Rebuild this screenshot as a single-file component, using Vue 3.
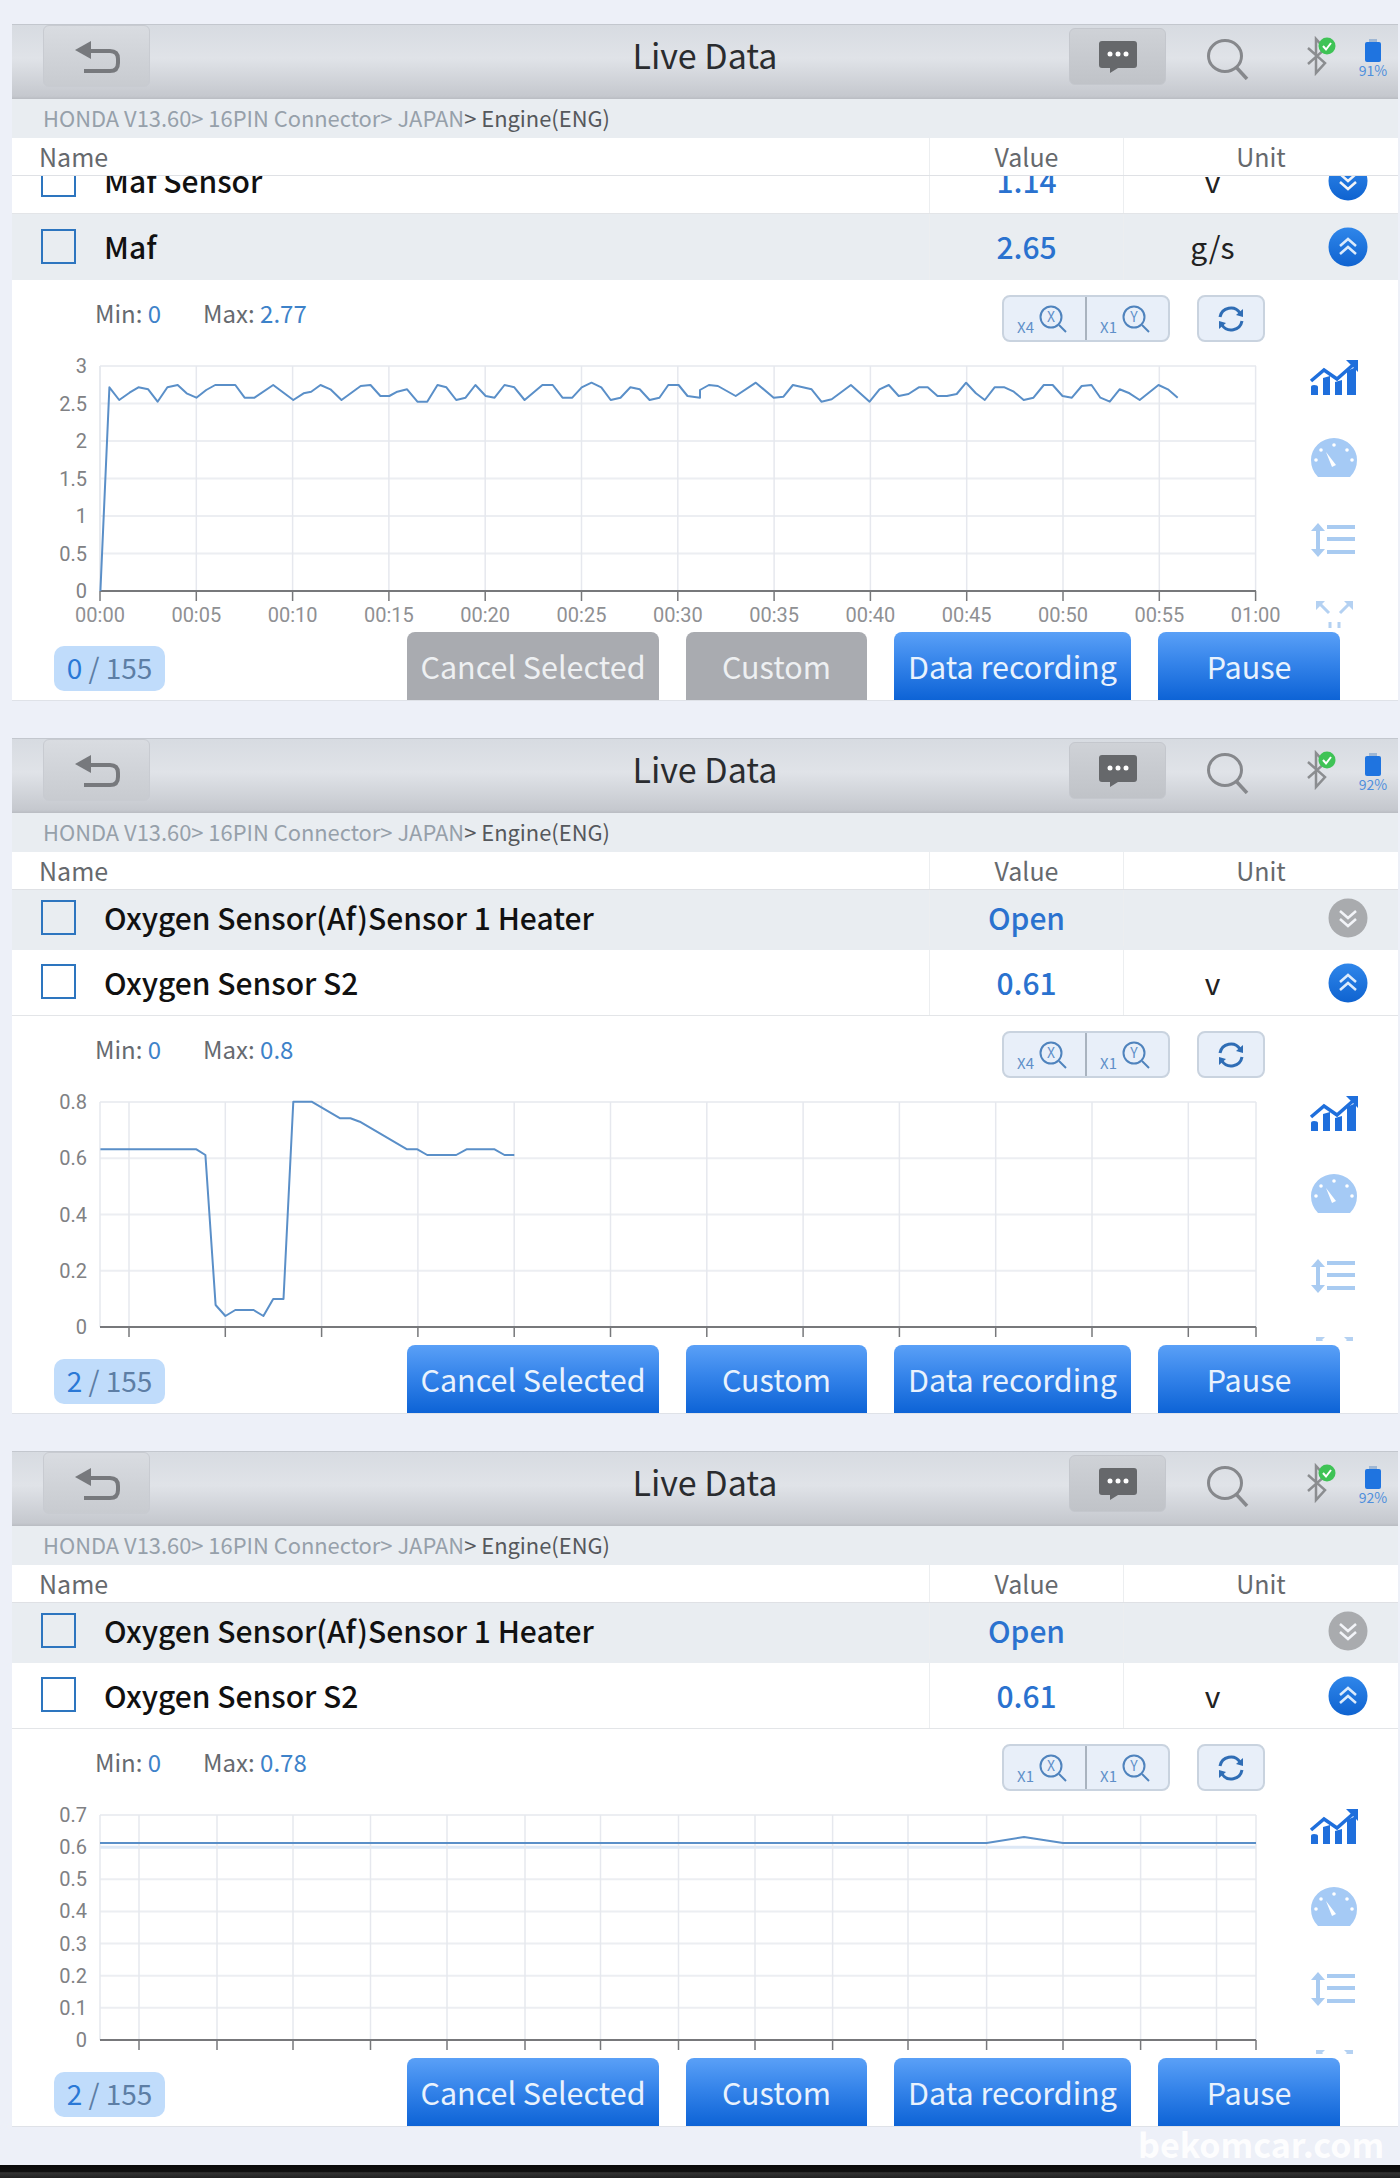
<script setup>
const X = (z) => z / 2.24
const pts1a = [[225,723],[245,112],[267,150],[290,128],[310,112],[332,118],[353,155],[375,112],[398,105],[418,130],[440,143],[462,120],[482,105],[527,105],[548,143],[570,143],[612,105],[657,150],[680,130],[697,125],[718,105],[740,118],[765,150],[808,108],[830,105],[852,138],[872,138],[890,125],[912,118],[935,155],[957,155],[980,105],[1000,112],[1022,150],[1043,143],[1065,105],[1088,138],[1108,143],[1130,105],[1152,112],[1175,150],[1215,105],[1238,105],[1260,143],[1282,143],[1303,112],[1325,98],[1347,112],[1368,150],[1390,143],[1412,112],[1433,118],[1455,150],[1477,143],[1497,105],[1520,105],[1540,138],[1568,143]]
const pts1b = [[0,120],[20,105],[40,108],[80,138],[125,98],[165,143],[187,140],[208,105],[250,118],[272,155],[295,148],[338,105],[380,155],[402,118],[423,105],[445,138],[467,132],[490,112],[510,112],[532,138],[553,138],[575,132],[596,98],[618,130],[638,150],[660,112],[682,112],[703,125],[725,150],[747,143],[770,105],[790,105],[812,138],[833,143],[855,108],[877,105],[897,143],[918,155],[940,118],[962,130],[985,150],[1027,105],[1048,118],[1070,143]]
const line1 = [
  ...pts1a.map(([x, y]) => [X(x), 350 + y / 3 - 355]),
  ...pts1b.map(([x, y]) => [700 + X(x), 350 + y / 3 - 355]),
]
const pts2 = [[225,298],[440,298],[460,315],[483,765],[505,798],[527,780],[568,780],[590,798],[612,747],[635,747],[657,155],[698,155],[762,205],[785,205],[806,215],[912,298],[935,298],[957,315],[1022,315],[1045,298],[1108,298],[1130,315],[1152,315]]
const line2 = pts2.map(([x, y]) => [X(x), 1050 + y / 3 - 1091])
const line3 = [[100, 39], [986.6, 39], [1024, 33], [1063, 39], [1256, 39]]

const toPoints = (l) => l.map((p) => p.map((n) => n.toFixed(1)).join(',')).join(' ')

const fiveSec = Array.from({ length: 13 }, (_, i) => 100 + i * 96.3)
const labels = ['00:00','00:05','00:10','00:15','00:20','00:25','00:30','00:35','00:40','00:45','00:50','00:55','01:00']

const panels = [
  {
    id: 1, battery: '91%', clipped: true,
    rows: [
      { name: 'Maf Sensor', value: '1.14', unit: 'v', dir: 'down', blue: true },
      { name: 'Maf', value: '2.65', unit: 'g/s', dir: 'up', blue: true, grey: true },
    ],
    min: '0', max: '2.77', xz: 'X4', yz: 'X1',
    height: 276,
    ys: ['3', '2.5', '2', '1.5', '1', '0.5', '0'],
    xs: fiveSec, xLabels: labels, line: toPoints(line1),
    count: '0', active: false,
  },
  {
    id: 2, battery: '92%',
    rows: [
      { name: 'Oxygen Sensor(Af)Sensor 1 Heater', value: 'Open', unit: '', dir: 'down', blue: false, grey: true, short: true },
      { name: 'Oxygen Sensor S2', value: '0.61', unit: 'v', dir: 'up', blue: true },
    ],
    min: '0', max: '0.8', xz: 'X4', yz: 'X1',
    height: 253,
    ys: ['0.8', '0.6', '0.4', '0.2', '0'],
    xs: Array.from({ length: 12 }, (_, i) => 129 + i * 96.3).concat(1256), xLabels: [],
    line: toPoints(line2), count: '2', active: true,
  },
  {
    id: 3, battery: '92%',
    rows: [
      { name: 'Oxygen Sensor(Af)Sensor 1 Heater', value: 'Open', unit: '', dir: 'down', blue: false, grey: true, short: true },
      { name: 'Oxygen Sensor S2', value: '0.61', unit: 'v', dir: 'up', blue: true },
    ],
    min: '0', max: '0.78', xz: 'X1', yz: 'X1',
    height: 253,
    ys: ['0.7', '0.6', '0.5', '0.4', '0.3', '0.2', '0.1', '0'],
    xs: [139,217,293,370.5,447,525,600.5,678.5,755,832.6,908,986.6,1063,1140.6,1216.5,1256], xLabels: [],
    line: toPoints(line3), count: '2', active: true, band: 1,
  },
]

const yPos = (p, i) => 11 + (225 * i) / (p.ys.length - 1)
const buttons = ['Cancel Selected', 'Custom', 'Data recording', 'Pause']
</script>

<template>
  <div class="page">
    <div v-for="p in panels" :key="p.id" class="panel">
      <header class="topbar">
        <button class="back">
          <svg width="50" height="38" viewBox="0 0 50 38"><path d="M18 14H38Q46 14 46 22V26Q46 34 38 34H12" fill="none" stroke="#77797d" stroke-width="4"/><path d="M3 13L19 4V22Z" fill="#77797d"/></svg>
        </button>
        <h1 class="title">Live Data</h1>
        <button class="chat">
          <svg width="40" height="34" viewBox="0 0 40 34"><path d="M4 1H36Q39 1 39 4V25Q39 28 36 28H20L12 33V28H4Q1 28 1 25V4Q1 1 4 1Z" fill="#66686b"/><circle cx="12" cy="14" r="2.5" fill="#fff"/><circle cx="20" cy="14" r="2.5" fill="#fff"/><circle cx="28" cy="14" r="2.5" fill="#fff"/></svg>
        </button>
        <svg class="search" width="42" height="42" viewBox="0 0 42 42"><ellipse cx="18" cy="18" rx="16.5" ry="15.5" fill="none" stroke="#86888c" stroke-width="3"/><path d="M29 29L40 41" stroke="#86888c" stroke-width="3.5"/></svg>
        <svg class="bt" width="34" height="40" viewBox="0 0 34 40"><path d="M5 12L22 27L13 37V3L22 13L5 28" fill="none" stroke="#8b8d90" stroke-width="2.5"/><circle cx="24" cy="10" r="8.5" fill="#3fc356"/><path d="M20 10L23 13.5L28 7" fill="none" stroke="#fff" stroke-width="2"/></svg>
        <div class="battery">
          <svg width="18" height="24" viewBox="0 0 18 24"><rect x="5" y="0" width="8" height="3" fill="#9fb7d4"/><rect x="1" y="3" width="16" height="20" rx="2" fill="#1f74e0"/></svg>
          <span>{{ p.battery }}</span>
        </div>
      </header>

      <div class="crumb"><span class="faint">HONDA V13.60&gt; 16PIN Connector&gt; JAPAN</span>&gt; Engine(ENG)</div>

      <div class="thead">
        <span class="th-name">Name</span>
        <span class="th-cell">Value</span>
        <span class="th-cell">Unit</span>
      </div>

      <div class="rows">
        <div v-for="r in p.rows" :key="r.name" class="row" :class="{ grey: r.grey, short: r.short }">
          <div class="name"><span class="check"></span>{{ r.name }}</div>
          <div class="value">{{ r.value }}</div>
          <div class="unit">{{ r.unit }}</div>
          <div class="toggle">
            <svg width="40" height="40" viewBox="0 0 40 40">
              <defs>
                <linearGradient :id="`b${p.id}${r.name.length}`" x1="0" y1="0" x2="0" y2="1"><stop offset="0" stop-color="#2f86ea"/><stop offset="1" stop-color="#0f63d0"/></linearGradient>
              </defs>
              <circle cx="20" cy="20" r="19.5" :fill="r.blue ? `url(#b${p.id}${r.name.length})` : '#a9abae'"/>
              <path v-if="r.dir === 'up'" d="M12 19L20 12L28 19M12 27L20 20L28 27" fill="none" stroke="#dcebfc" stroke-width="2.5"/>
              <path v-else d="M12 13L20 20L28 13M12 21L20 28L28 21" fill="none" stroke="#f2f4f8" stroke-width="2.5"/>
            </svg>
          </div>
        </div>
      </div>

      <div class="controls">
        <div class="minmax">
          <span>Min: <b>{{ p.min }}</b></span>
          <span>Max: <b>{{ p.max }}</b></span>
        </div>
        <div class="zoomers">
          <div class="zoom">
            <span class="zlabel">{{ p.xz }}</span>
            <svg width="30" height="30" viewBox="0 0 30 30"><circle cx="13" cy="12" r="10.5" fill="none" stroke="#4f83bd" stroke-width="2"/><path d="M21 20L28 27" stroke="#4f83bd" stroke-width="2"/><text x="13" y="17" class="zletter">X</text></svg>
          </div>
          <div class="zoom">
            <span class="zlabel">{{ p.yz }}</span>
            <svg width="30" height="30" viewBox="0 0 30 30"><circle cx="13" cy="12" r="10.5" fill="none" stroke="#4f83bd" stroke-width="2"/><path d="M21 20L28 27" stroke="#4f83bd" stroke-width="2"/><text x="13" y="17" class="zletter">Y</text></svg>
          </div>
        </div>
        <button class="refresh">
          <svg width="28" height="28" viewBox="0 0 28 28"><path d="M3 12A11 11 0 0 1 23 8" fill="none" stroke="#2f6db5" stroke-width="3"/><path d="M25 16A11 11 0 0 1 5 20" fill="none" stroke="#2f6db5" stroke-width="3"/><path d="M19 10L26 4L26 12Z" fill="#2f6db5"/><path d="M9 18L2 24L2 16Z" fill="#2f6db5"/></svg>
        </button>
      </div>

      <div class="chartrow" :style="{ height: p.height + 'px' }">
        <svg class="chart" width="1290" :height="p.height" :viewBox="`12 0 1290 ${p.height}`">
          <line v-for="(y, i) in p.ys" :key="'h' + i" x1="100" x2="1256" :y1="yPos(p, i)" :y2="yPos(p, i)" :stroke="p.band === i ? '#dde8f6' : '#eceef2'" :stroke-width="p.band === i ? 3 : 2"/>
          <line v-for="x in p.xs" :key="'v' + x" :x1="x" :x2="x" y1="11" y2="236" stroke="#e6e8ee" stroke-width="1.5"/>
          <line x1="100" x2="100" y1="11" y2="236" stroke="#e6e8ee" stroke-width="1.5"/>
          <line x1="100" x2="1256" y1="236" y2="236" stroke="#77787b" stroke-width="2"/>
          <line v-for="x in p.xs" :key="'t' + x" :x1="x" :x2="x" y1="236" y2="246" stroke="#77787b" stroke-width="1.5"/>
          <text v-for="(y, i) in p.ys" :key="'yl' + i" x="87" :y="yPos(p, i) + 7" class="ylab">{{ y }}</text>
          <text v-for="(l, i) in p.xLabels" :key="l" :x="p.xs[i]" y="267" class="xlab">{{ l }}</text>
          <polyline :points="p.line" fill="none" stroke="#5a8fc8" stroke-width="2" stroke-linejoin="round"/>
        </svg>
        <div class="side">
          <svg width="60" height="40" viewBox="0 0 60 40"><path d="M7 37V29Q7 27 10 27Q14 27 14 29V37ZM19 37V20L26 18V37ZM31 37V24L38 22V37ZM43 37V13L52 9V37Z" fill="#1f6fdc"/><path d="M7 23L20 12L33 21L50 6" fill="none" stroke="#1f6fdc" stroke-width="3.5"/><path d="M42 2H54V14Z" fill="#1f6fdc"/></svg>
          <svg width="60" height="40" viewBox="0 0 60 40"><path d="M14 39Q7 32 7 22A23 22 0 0 1 53 22Q53 32 46 39Z" fill="#a5caf5"/><path d="M22 14L32 27L28 29Z" fill="#fff"/><circle cx="30" cy="7" r="1.8" fill="#fff"/><circle cx="17" cy="12" r="1.8" fill="#fff"/><circle cx="43" cy="12" r="1.8" fill="#fff"/><circle cx="12" cy="22" r="1.8" fill="#fff"/><circle cx="48" cy="22" r="1.8" fill="#fff"/></svg>
          <svg class="listicon" width="60" height="40" viewBox="0 0 60 40"><path d="M14 6V33" stroke="#a9cbf1" stroke-width="4"/><path d="M7 11L14 3L21 11ZM7 29L14 37L21 29Z" fill="#a9cbf1"/><path d="M23 7H51M23 19H51M23 32H51" stroke="#a9cbf1" stroke-width="4"/></svg>
          <svg class="arrows" width="60" height="40" viewBox="0 0 60 40"><path d="M25 15L16 6M36 15L45 6M26 24L26 30M35 24L35 30" stroke="#b4d1f2" stroke-width="3"/><path d="M12 3H21L12 12ZM49 3H40L49 12Z" fill="#b4d1f2"/></svg>
        </div>
      </div>

      <footer class="foot">
        <div class="chip"><b>{{ p.count }}</b> / 155</div>
        <button v-for="(b, i) in buttons" :key="b" class="act" :class="['b' + i, { off: !p.active && i < 2 }]">{{ b }}</button>
      </footer>
    </div>
    <div class="mark">bekomcar.com</div>
    <div class="darkbar"></div>
  </div>
</template>

<style>
html, body { margin: 0; background: #edf0f8; }
</style>

<style scoped>
.page {
  position: relative;
  height: 2178px;
  box-sizing: border-box;
  padding: 24px 2px 0 12px;
  display: flex;
  flex-direction: column;
  gap: 38px;
  background: #edf0f8;
  font-family: "Noto Sans CJK SC", "Noto Sans", sans-serif;
  overflow: hidden;
}
button { font-family: inherit; padding: 0; }
.panel { background: #fff; box-shadow: 0 1px 0 #dfe2e8; }

.topbar {
  height: 75px;
  display: flex;
  align-items: center;
  position: relative;
  box-sizing: border-box;
  padding-bottom: 11px;
  border-top: 1px solid #c3c7ce;
  background: linear-gradient(#d7dbe1, #e0e3e8 45%, #c5c8ce 96%, #b9bcc2);
}
.back {
  margin-left: 31px;
  width: 107px;
  height: 62px;
  align-self: flex-start;
  border: 1px solid #c8cbd1;
  border-radius: 6px;
  background: linear-gradient(#d9dce1, #c8cbd0);
  display: flex;
  align-items: center;
  justify-content: center;
}
.title {
  position: absolute;
  left: 0;
  right: 0;
  top: 6px;
  margin: 0;
  text-align: center;
  font-size: 34px;
  line-height: 48px;
  font-weight: 400;
  color: #2a2c2f;
  pointer-events: none;
}
.chat {
  margin-left: auto;
  width: 97px;
  height: 57px;
  border: 1px solid #c4c7cd;
  border-radius: 6px;
  background: linear-gradient(#cfd2d7, #c0c3c8);
  display: flex;
  align-items: center;
  justify-content: center;
}
.search { margin-left: 41px; margin-top: 4px; }
.bt { margin-left: 54px; margin-top: -2px; }
.battery {
  width: 36px;
  margin-left: 18px;
  margin-right: 7px;
  margin-top: 2px;
  display: flex;
  flex-direction: column;
  align-items: center;
  font-size: 14px;
  line-height: 14px;
  color: #4f8fdc;
}
.crumb {
  height: 39px;
  box-sizing: border-box;
  padding-left: 31px;
  background: #e9edf1;
  font-size: 21.9px;
  line-height: 37px;
  color: #55585c;
}
.faint { color: #96a0aa; }
.thead {
  height: 38px;
  box-sizing: border-box;
  border-bottom: 1px solid #dfe1e5;
  display: grid;
  grid-template-columns: 917px 194px 1fr;
  font-size: 25px;
  line-height: 36px;
  color: #66696d;
}
.th-name { padding-left: 27px; }
.th-cell { text-align: center; border-left: 1px solid #eceef0; }

.rows {
  display: flex;
  flex-direction: column;
  justify-content: flex-end;
  overflow: hidden;
  height: 126px;
}
.panel:first-child .rows { height: 104px; }
.row {
  flex: none;
  height: 66px;
  box-sizing: border-box;
  border-bottom: 1px solid #e3e5e8;
  display: grid;
  grid-template-columns: 917px 194px 178px 1fr;
  align-items: stretch;
  background: #fff;
}
.row.short { height: 60px; padding-bottom: 4px; }
.row.grey { background: #e9edf1; border-bottom: none; }
.row > div { display: flex; align-items: center; }
.name, .value, .unit { padding-bottom: 2px; }
.name { font-size: 30px; font-weight: 500; color: #111; padding-left: 29px; }
.check {
  width: 31px;
  height: 31px;
  border: 2px solid #2d75bf;
  margin-right: 28px;
  flex: none;
}
.value {
  justify-content: center;
  font-size: 30px;
  font-weight: 500;
  color: #2a72cf;
  border-left: 1px solid #eceef0;
}
.unit {
  justify-content: center;
  font-size: 30px;
  color: #222;
  border-left: 1px solid #eceef0;
}
.toggle { padding-left: 27px; }

.controls {
  height: 75px;
  box-sizing: border-box;
  padding-top: 15px;
  display: flex;
  align-items: flex-start;
}
.minmax {
  margin-left: 83px;
  margin-top: 1px;
  display: flex;
  gap: 42px;
  font-size: 24px;
  line-height: 34px;
  color: #666a70;
}
.minmax b { font-weight: 400; color: #3d82c9; }
.zoomers {
  margin-left: auto;
  width: 168px;
  height: 47px;
  box-sizing: border-box;
  display: flex;
  border: 2px solid #c9d3df;
  border-radius: 8px;
  background: #e8eff9;
}
.zoom {
  flex: 1;
  display: flex;
  align-items: flex-start;
  justify-content: center;
  gap: 4px;
  padding-top: 8px;
  padding-right: 4px;
}
.zoom + .zoom { border-left: 2px solid #a9b3bf; }
.zlabel { font-size: 15px; line-height: 15px; margin-top: 14px; color: #5f8fc9; }
.zletter { font-size: 14px; fill: #5f8fc9; text-anchor: middle; }
.refresh {
  margin-left: 27px;
  margin-right: 133px;
  width: 68px;
  height: 47px;
  border: 2px solid #c9d3df;
  border-radius: 8px;
  background: #e8eff9;
  display: flex;
  align-items: center;
  justify-content: center;
}

.chartrow { display: flex; overflow: hidden; }
.chart { flex: none; display: block; }
.ylab { font: 20px Roboto, sans-serif; fill: #808184; text-anchor: end; }
.xlab { font: 20px Roboto, sans-serif; fill: #8f9093; text-anchor: middle; }
.side {
  height: calc(100% - 3px);
  overflow: hidden;
  padding-top: 3px;
  box-sizing: border-box;
  margin-left: 2px;
  display: flex;
  flex-direction: column;
  gap: 40px;
}
.side svg { flex: none; display: block; }
.listicon { transform: translateY(2px); }

.foot {
  height: 69px;
  display: flex;
  align-items: flex-end;
  padding-left: 42px;
}
.chip {
  align-self: flex-start;
  margin-top: 15px;
  margin-right: auto;
  width: 111px;
  height: 45px;
  border-radius: 10px;
  background: #c0dcfb;
  text-align: center;
  font-size: 28px;
  line-height: 43px;
  color: #5d7ea5;
}
.chip b { font-weight: 400; color: #2a78d6; }
.act {
  height: 68px;
  border: none;
  border-radius: 8px 8px 0 0;
  background: linear-gradient(#5aa0f7, #3584ea 45%, #0d63d6);
  color: #e9f2fd;
  font-size: 30.5px;
  line-height: 68px;
  margin-left: 27px;
}
.act.off { background: #a9abb0; color: #eef0f2; }
.b0 { width: 252px; }
.b1 { width: 181px; }
.b2 { width: 237px; }
.b3 { width: 182px; margin-right: 58px; }

.mark {
  position: absolute;
  left: 1138px;
  top: 2124px;
  font-size: 34px;
  line-height: 40px;
  font-weight: 700;
  color: rgba(255, 255, 255, 0.92);
}
.darkbar {
  position: absolute;
  left: 0;
  right: 0;
  top: 2165px;
  height: 13px;
  background: linear-gradient(#0a0a0a, #111 50%, #333 60%, #222);
}
</style>
